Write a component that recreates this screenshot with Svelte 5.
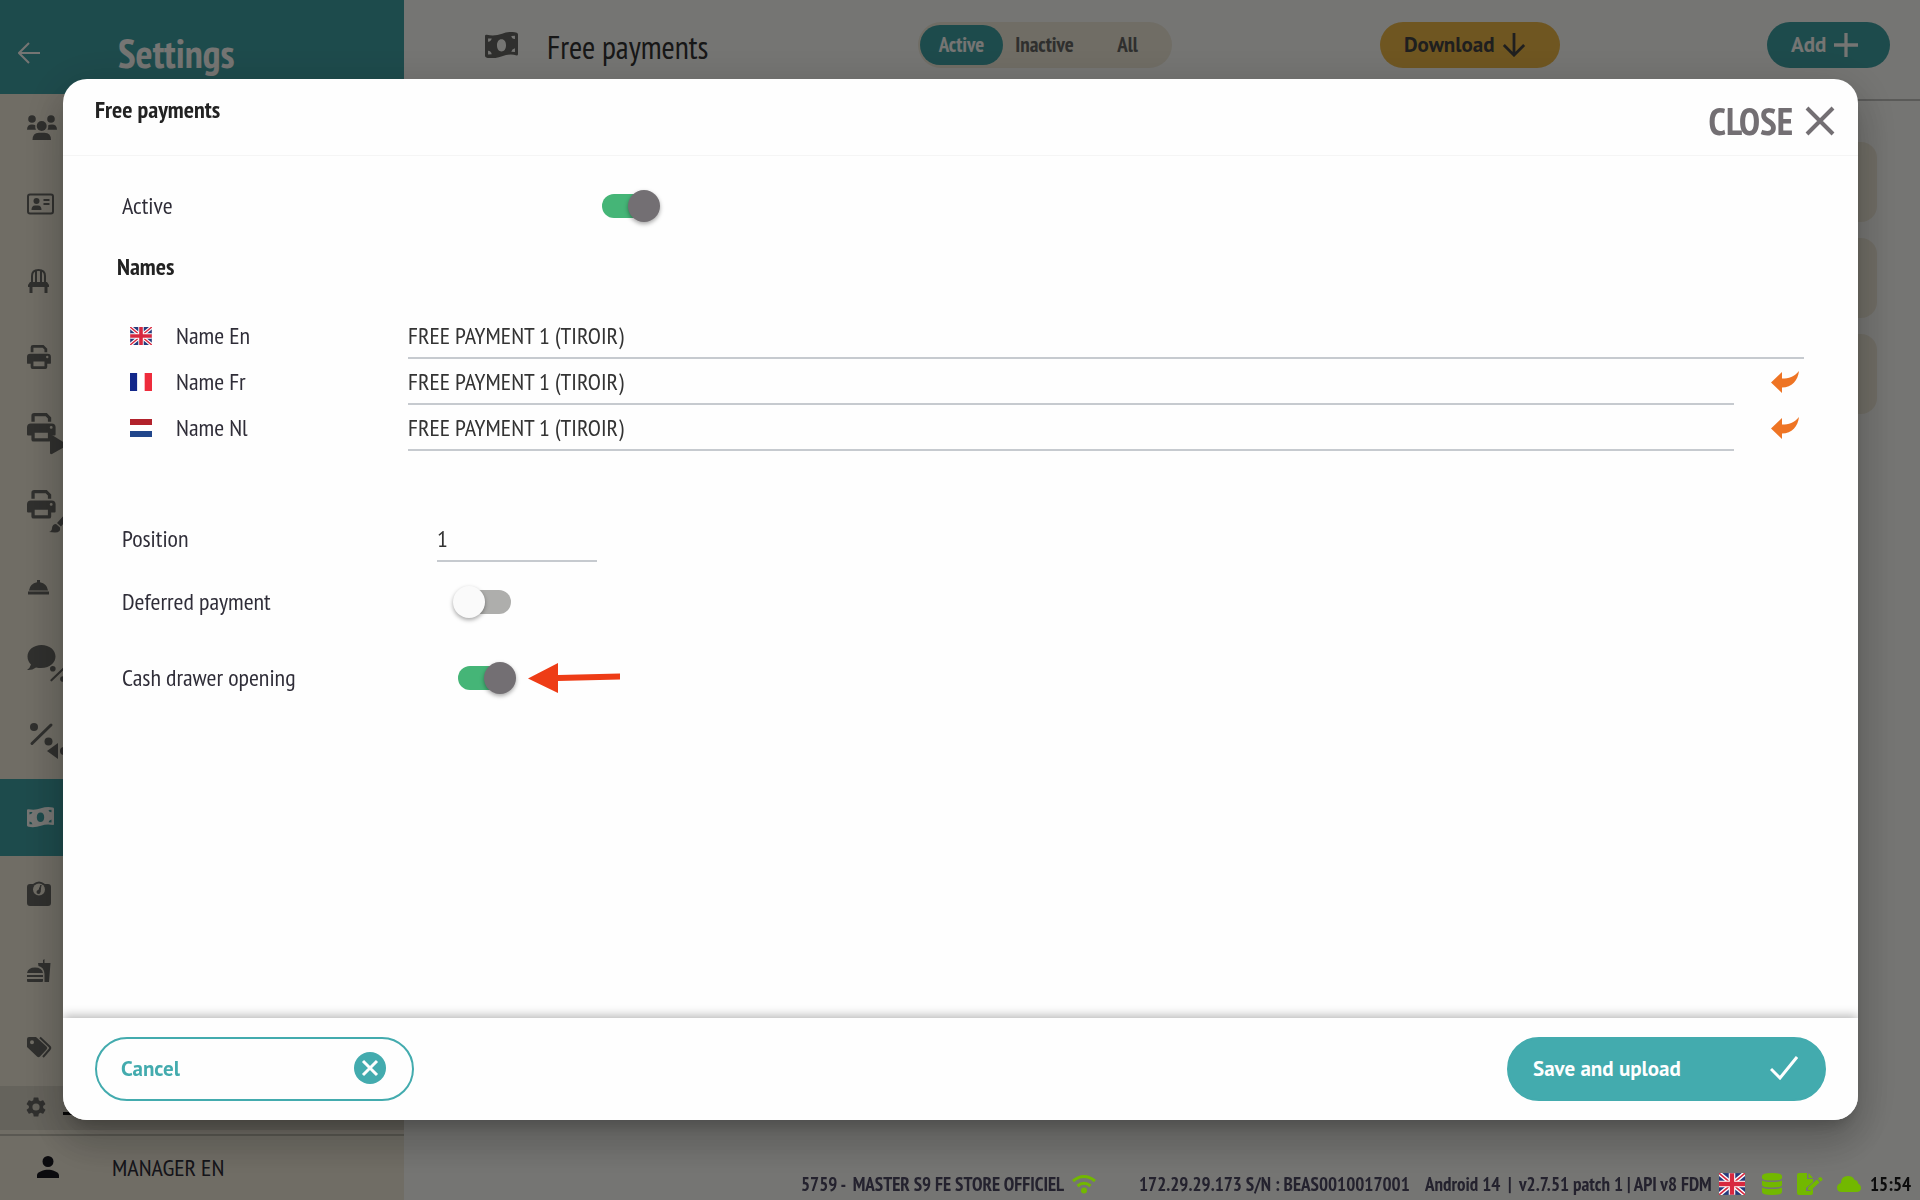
<script lang="ts">
    type Tab = "Active" | "Inactive" | "All";

    const menu = [
        {id: "people", label: "Users"},
        {id: "card", label: "Customers"},
        {id: "chair", label: "Tables"},
        {id: "printer", label: "Printers"},
        {id: "printerPlay", label: "Printer routing"},
        {id: "printerBrush", label: "Printer layout"},
        {id: "bell", label: "Services"},
        {id: "chat", label: "Discount messages"},
        {id: "percent", label: "Discounts"},
        {id: "money", label: "Free payments"},
        {id: "scale", label: "Scale"},
        {id: "food", label: "Products"},
        {id: "tags", label: "Tags"},
    ];
    const tabs: Tab[] = ["Active", "Inactive", "All"];

    let tab = $state<Tab>("Active");
    let active = $state(true);
    let position = $state("1");
    let deferred = $state(false);
    let drawer = $state(true);
    let names = $state([
        {lang: "En", value: "FREE PAYMENT 1 (TIROIR)"},
        {lang: "Fr", value: "FREE PAYMENT 1 (TIROIR)"},
        {lang: "Nl", value: "FREE PAYMENT 1 (TIROIR)"},
    ]);

    // Copy the main name over a translated one.
    function resetName(i: number) {
        names[i].value = names[0].value;
    }
</script>

{#snippet moneyShape()}
    <path fill-rule="evenodd" d="M0 3Q0 2 1.500 2.200Q8 3.500 14 1.300T26 .5Q27 .8 27 2V17Q27 18.200 26 18Q20 16.500 14 18.700T1.500 19.800Q0 19.500 0 18.500V3ZM13.500 5.500C11.200 5.500 9.800 7.500 9.800 10.200S11.200 15 13.500 15 17.200 13 17.200 10.200 15.800 5.500 13.500 5.500ZM2.500 5V7.500Q5 7.300 5.500 5ZM21.500 3Q22 5.500 24.500 5.300V2.800ZM2.500 14.500V17.300L5.500 17.200Q5 14.700 2.500 14.500ZM24.500 12.500Q22 13 21.500 15.200L24.500 15.400Z"/>
{/snippet}

{#snippet printerShape()}
    <path fill-rule="evenodd" d="M4 8V2.500Q4 0 6.500 0H18L22 4V8H19V5L17 3H7V8ZM3.500 9.500H22.500Q26 9.500 26 13V19.500Q26 20.500 25 20.500H22V24Q22 26 20 26H6Q4 26 4 24V20.500H1Q0 20.500 0 19.500V13Q0 9.500 3.500 9.500ZM7 18V23H19V18ZM22 11.800A1.300 1.300 0 1 0 22 14.400A1.300 1.300 0 1 0 22 11.800Z"/>
{/snippet}

{#snippet percentShape()}
    <circle cx="4" cy="4" r="4"/>
    <circle cx="18.500" cy="18.500" r="4"/>
    <path d="M2 20.500 21 2" fill="none" stroke="currentColor" stroke-width="3" stroke-linecap="round"/>
{/snippet}

{#snippet ukFlag()}
    <svg class="flag" viewBox="0 0 24 20" aria-hidden="true">
        <path fill="#253a7c" d="M0 0h24v20H0z"/>
        <path stroke="#fff" stroke-width="4" d="m0 0 24 20M24 0 0 20"/>
        <path stroke="#d8283f" stroke-width="1.500" d="m0 0 24 20M24 0 0 20"/>
        <path stroke="#fff" stroke-width="6" d="M12 0v20M0 10h24"/>
        <path stroke="#d8283f" stroke-width="4" d="M12 0v20M0 10h24"/>
    </svg>
{/snippet}

{#snippet menuIcon(id: string)}
    <svg class="icon" viewBox="0 0 40 40" aria-hidden="true">
        {#if id === "people"}
            <circle cx="8" cy="12" r="3.800"/>
            <circle cx="27" cy="12" r="3.800"/>
            <circle cx="17.700" cy="19" r="5"/>
            <path d="M3 22.800Q3 17.500 8 17.500Q10.500 17.500 11.300 18.300Q11 21 12 22.800ZM33 22.800Q33 17.500 28 17.500Q25 17.500 24.200 18.300Q24.500 21 23.500 22.800ZM8.500 33Q8.500 25.700 15 25.700H20.500Q27 25.700 27 33Z"/>
        {:else if id === "card"}
            <rect x="4" y="10.500" width="25" height="19" rx="2" fill="none" stroke="currentColor" stroke-width="2"/>
            <circle cx="12.500" cy="17" r="3"/>
            <path d="M7.500 26Q7.500 21.500 11 21.500H14Q17.500 21.500 17.500 26ZM19.500 15H25.500V17H19.500ZM19.500 19H25.500V21H19.500Z"/>
        {:else if id === "chair"}
            <path fill="none" stroke="currentColor" stroke-width="2" d="M8 21V15Q8 9 14.500 9T21 15V21M12 21V10M17 21V10"/>
            <path d="M6 21H23L25 24V26H23.500V32H20.500V26H8.500V32H5.500V26H4V24Z"/>
        {:else if id === "printer"}
            <g transform="translate(3 8) scale(.92)">{@render printerShape()}</g>
        {:else if id === "printerPlay"}
            <g transform="translate(3 -1) scale(1.100)">{@render printerShape()}</g>
            <path d="M26 22Q26 20.500 28 21L44 31 28 40Q26 40.500 26 39Z"/>
        {:else if id === "printerBrush"}
            <g transform="translate(3 -1) scale(1.100)">{@render printerShape()}</g>
            <path d="M25 41Q28 40 28 37Q28.500 33 32 33L36 36.500Q37 41.500 31 41.500ZM33 32 42 22 45 26 37 35.500Z"/>
        {:else if id === "bell"}
            <path d="M4 24.500H25V27.500H4ZM5 23.500Q6 16.500 13 15.300V13H16V15.300Q23 16.500 24 23.500Z"/>
        {:else if id === "chat"}
            <path d="M17.500 1C9.500 1 3.500 6 3.500 12.500C3.500 16 5 18.500 7 20.500Q6 24 3 26Q8 26.500 12 23.500C25 26 31.500 19 31.500 12.500C31.500 6 25.500 1 17.500 1Z"/>
            <g transform="translate(26 22) scale(.7)">{@render percentShape()}</g>
        {:else if id === "percent"}
            <g transform="translate(6 2)">{@render percentShape()}</g>
            <path d="M23 30 34 22V38Z"/>
            <circle cx="40" cy="30" r="4"/>
        {:else if id === "money"}
            <g transform="translate(3 9)">{@render moneyShape()}</g>
        {:else if id === "scale"}
            <path d="M6 10H9Q15 5 21 10H24Q27 10 27 13V29Q27 32 24 32H6Q3 32 3 29V13Q3 10 6 10Z"/>
            <circle cx="15" cy="15.500" r="6" class="cut"/>
            <circle cx="14.500" cy="18" r="2"/>
            <path d="M14 18 17 11 16 18Z" stroke="currentColor"/>
        {:else if id === "food"}
            <path d="M3 22Q4 16.500 11 16.500T19 22ZM3 24H19V26H3ZM3 28H19V30Q19 31 18 31H4Q3 31 3 30ZM14 12H19V9L20.500 8V12H26.500L25 31H20.500V23Q20 16 14.500 15Z"/>
        {:else if id === "tags"}
            <path fill-rule="evenodd" d="M3 11Q3 9 5 9H12L22.500 18.500Q24 20 22.500 21.500L16 28.500Q14.500 30 13 28.500L3 19ZM8 12.200A2 2 0 1 0 8 16.200A2 2 0 1 0 8 12.200Z"/>
            <path fill="none" stroke="currentColor" stroke-width="2" d="M16 9.500 25.500 18.500Q27 20 25.500 21.500L19 29"/>
        {/if}
    </svg>
{/snippet}

{#snippet toggle(id: string, on: boolean, set: (v: boolean) => void)}
    <input class="switch" type="checkbox" role="switch" {id} checked={on}
           onchange={(e) => set(e.currentTarget.checked)}/>
{/snippet}

<div class="page">
    <aside class="sidebar">
        <header class="side-head">
            <button class="back" aria-label="Back">
                <svg viewBox="0 0 22 22" aria-hidden="true"><path d="M22 11H2M11 1 1 11l10 10"/></svg>
            </button>
            <h1>Settings</h1>
        </header>
        <nav class="menu" aria-label="Settings">
            {#each menu as m (m.id)}
                <button class="item" class:current={m.id === "money"} aria-label={m.label}>
                    {@render menuIcon(m.id)}
                </button>
            {/each}
        </nav>
        <button class="general" aria-label="General settings">
            <svg viewBox="2 2 20 20" aria-hidden="true"><path d="M19.140 12.940c.04-.3.06-.61.06-.94s-.02-.64-.07-.94l2.030-1.580a.49.49 0 0 0 .12-.61l-1.920-3.320a.49.49 0 0 0-.59-.22l-2.390.96a7 7 0 0 0-1.620-.94l-.36-2.540a.48.48 0 0 0-.48-.41h-3.840a.48.48 0 0 0-.47.41l-.36 2.540a7 7 0 0 0-1.620.94l-2.390-.96a.48.48 0 0 0-.59.22L2.740 8.870a.47.47 0 0 0 .12.61l2.030 1.580a6 6 0 0 0 0 1.880l-2.030 1.580a.49.49 0 0 0-.12.61l1.920 3.320c.12.220.37.290.59.220l2.390-.96c.5.380 1.030.700 1.620.940l.36 2.540c.05.240.24.410.48.410h3.840c.24 0 .44-.17.47-.41l.36-2.540a7 7 0 0 0 1.620-.94l2.390.96c.22.080.47 0 .59-.22l1.920-3.320a.47.47 0 0 0-.12-.61zM12 15.600a3.600 3.600 0 1 1 0-7.200 3.600 3.600 0 0 1 0 7.200"/></svg>
            <span class="mark"></span>
        </button>
        <footer class="user">
            <svg viewBox="4 4 16 16" aria-hidden="true"><path d="M12 12a4 4 0 1 0 0-8 4 4 0 0 0 0 8m0 2c-2.670 0-8 1.340-8 4v2h16v-2c0-2.660-5.330-4-8-4"/></svg>
            <span>MANAGER EN</span>
        </footer>
    </aside>

    <main>
        <header class="bar">
            <svg class="bar-icon" viewBox="0 0 27 20" preserveAspectRatio="none" aria-hidden="true">{@render moneyShape()}</svg>
            <h2>Free payments</h2>
            <div class="tabs">
                {#each tabs as t (t)}
                    <button class="tab" class:selected={tab === t} onclick={() => (tab = t)}>{t}</button>
                {/each}
            </div>
            <button class="pill download">Download
                <svg viewBox="0 0 24 26" aria-hidden="true"><path d="M12 0v24M1 13l11 11 11-11"/></svg>
            </button>
            <button class="pill add">Add
                <svg viewBox="0 0 22 22" aria-hidden="true"><path d="M11 0v22M0 11h22"/></svg>
            </button>
        </header>
        <div class="cards">
            <div class="card"></div>
            <div class="card"></div>
            <div class="card"></div>
        </div>
    </main>
</div>

<div class="backdrop">
    <div class="dialog" role="dialog" aria-modal="true" aria-labelledby="dialog-title">
        <header class="dialog-head">
            <h3 id="dialog-title">Free payments</h3>
            <button class="close">CLOSE
                <svg viewBox="0 0 30 30" aria-hidden="true"><path d="m2 2 26 26M28 2 2 28"/></svg>
            </button>
        </header>

        <form class="body">
            <div class="row first">
                <label for="active">Active</label>
                {@render toggle("active", active, (v) => (active = v))}
            </div>

            <h4>Names</h4>
            {#each names as n, i (n.lang)}
                <div class="name-row">
                    {#if n.lang === "En"}
                        {@render ukFlag()}
                    {:else if n.lang === "Fr"}
                        <svg class="flag" viewBox="0 0 3 2" preserveAspectRatio="none" aria-hidden="true"><path fill="#12278a" d="M0 0h1v2H0z"/><path fill="#fff" d="M1 0h1v2H1z"/><path fill="#ee2c3c" d="M2 0h1v2H2z"/></svg>
                    {:else}
                        <svg class="flag" viewBox="0 0 3 3" preserveAspectRatio="none" aria-hidden="true"><path fill="#b2222c" d="M0 0h3v1H0z"/><path fill="#fff" d="M0 1h3v1H0z"/><path fill="#21468b" d="M0 2h3v1H0z"/></svg>
                    {/if}
                    <label for="name-{n.lang}">Name {n.lang}</label>
                    <input class="field" id="name-{n.lang}" type="text" bind:value={n.value}/>
                    {#if i > 0}
                        <button class="reset" type="button" aria-label="Copy main name" onclick={() => resetName(i)}>
                            <svg viewBox="0 0 28 22" aria-hidden="true"><path d="M0 11.500 11 1V7.500C18 7.500 23 6 28 0C27 9 21 16.500 11 16.500V22Z"/></svg>
                        </button>
                    {/if}
                </div>
            {/each}

            <div class="row position">
                <label for="position">Position</label>
                <input class="field" id="position" type="text" inputmode="numeric" bind:value={position}/>
            </div>
            <div class="row deferred">
                <label for="deferred">Deferred payment</label>
                {@render toggle("deferred", deferred, (v) => (deferred = v))}
            </div>
            <div class="row drawer">
                <label for="drawer">Cash drawer opening</label>
                {@render toggle("drawer", drawer, (v) => (drawer = v))}
                <svg class="pointer" viewBox="0 0 92 30" aria-hidden="true"><path d="M0 15.500 30 0V12L92 10.500V16.500L30 18V30Z"/></svg>
            </div>
        </form>

        <footer class="actions">
            <button class="action cancel">Cancel
                <svg viewBox="0 0 32 32" aria-hidden="true"><circle cx="16" cy="16" r="16"/><path d="m9 9 14 14M23 9 9 23"/></svg>
            </button>
            <button class="action save">Save and upload
                <svg viewBox="0 0 28 24" aria-hidden="true"><path d="m1 13 9 9L27 1"/></svg>
            </button>
        </footer>
    </div>
</div>

<div class="status">
    <span>5759 -&nbsp; MASTER S9 FE STORE OFFICIEL</span>
    <svg class="wifi" viewBox="0 0 26 20" aria-hidden="true"><path d="M2 7Q13-2 24 7M6.500 12Q13 6.500 19.500 12"/><circle cx="13" cy="16.500" r="3"/></svg>
    <span>172.29.29.173 S/N : BEAS0010017001</span>
    <span>Android 14 &nbsp;|</span>
    <span>v2.7.51 patch 1 | API v8 FDM</span>
    {@render ukFlag()}
    <svg class="db" viewBox="0 0 20 22" aria-hidden="true"><path d="M0 3Q0 0 10 0T20 3V5Q20 7.500 10 7.500T0 5ZM0 7.500Q3 9 10 9T20 7.500V12Q20 14.500 10 14.500T0 12ZM0 14.500Q3 16 10 16T20 14.500V19Q20 22 10 22T0 19Z"/></svg>
    <svg class="doc" viewBox="0 0 26 22" aria-hidden="true"><path d="M0 2Q0 0 2 0H10V6H16V9L9 15V18H13L16 15.500V20Q16 22 14 22H2Q0 22 0 20ZM11.500 0 16 5H11.500ZM11 14.500 20 6.500 22.500 9.500 14 17H11ZM21 5.500 23 4Q26 5 25.500 7L23.500 8.500Z"/></svg>
    <svg class="cloud" viewBox="0 0 24 16" aria-hidden="true"><path d="M5 16Q0 16 0 11.500 0 8 4 7 4 0 11 0 16 0 17.500 4 21 4 21 7.500 24 9 24 12 24 16 19.500 16Z"/></svg>
    <time>15:54</time>
</div>

<style>
    :global(body) {
        margin: 0;
        background: #fefefa;
        font-family: "PT Sans Narrow", "Liberation Sans Narrow", "Open Sans", sans-serif;
        color: #2f2d38;
    }

    h1, h2, h3, h4 {
        margin: 0;
    }

    button, input {
        font: inherit;
        color: inherit;
        border: none;
        background: none;
        padding: 0;
    }

    button {
        cursor: pointer;
    }

    svg {
        display: block;
        flex: none;
        fill: currentColor;
    }

    .page {
        display: grid;
        grid-template-columns: 404px 1fr;
        min-height: 100vh;
    }

    .sidebar {
        display: flex;
        flex-direction: column;
        background: #f3eddc;
        color: #686864;
    }

    .side-head {
        display: flex;
        align-items: center;
        gap: 78px;
        height: 94px;
        padding-left: 18px;
        box-sizing: border-box;
        padding-top: 12px;
        background: #41a3a6;
        color: #fefefa;
        position: relative;
        z-index: 1;
    }

    .back svg {
        width: 22px;
        height: 22px;
        fill: none;
        stroke: currentColor;
        stroke-width: 2;
    }

    h1 {
        font-size: 40px;
        line-height: 40px;
    }

    /* First entry is scrolled a little under the header */
    .menu {
        flex: 1;
        display: flex;
        flex-direction: column;
        margin-top: -5px;
    }

    .item {
        flex: 1;
        display: flex;
        align-items: center;
        padding-left: 24px;
    }

    .item.current {
        background: #41a3a6;
        color: #fefefa;
    }

    .icon {
        width: 40px;
        height: 40px;
        overflow: visible;
    }

    .cut {
        fill: #f3eddc;
    }

    .general {
        display: flex;
        align-items: center;
        gap: 17px;
        height: 44px;
        box-sizing: border-box;
        margin-bottom: 4px;
        padding: 0 0 2px 26px;
        background: #dcd7c8;
    }

    .general svg {
        width: 20px;
        height: 20px;
    }

    .mark {
        width: 16px;
        height: 3px;
        margin-top: 12px;
        background: #111;
    }

    .user {
        display: flex;
        align-items: center;
        gap: 53px;
        height: 66px;
        box-sizing: border-box;
        padding: 0 0 2px 37px;
        border-top: 2px solid #c4c0b2;
        font-size: 24px;
        color: #2f2d38;
    }

    .user svg {
        width: 22px;
        height: 22px;
        fill: #1a1820;
    }

    .bar {
        display: flex;
        align-items: center;
        height: 101px;
        box-sizing: border-box;
        padding: 0 30px 10px 81px;
        border-bottom: 2px solid #c4c4c0;
        font-size: 21px;
        font-weight: 700;
    }

    .bar-icon {
        width: 33px;
        height: 26px;
        color: #686864;
    }

    h2 {
        width: 371px;
        margin-left: 29px;
        font-size: 32px;
        font-weight: 400;
        color: #333;
        padding-top: 4px;
    }

    .tabs {
        display: grid;
        grid-template-columns: 83px 83px 83px;
        box-sizing: border-box;
        width: 254px;
        height: 46px;
        padding: 3px 2px;
        border-radius: 23px;
        background: #f3eddc;
        color: #686864;
        margin-right: auto;
    }

    .tab {
        border-radius: 20px;
    }

    .tab.selected {
        background: #41a3a6;
        color: #fefefa;
    }

    .pill {
        display: flex;
        align-items: center;
        box-sizing: border-box;
        gap: 8px;
        height: 46px;
        padding-left: 24px;
        border-radius: 23px;
        font-family: "PT Sans", "Open Sans", sans-serif;
    }

    .pill svg {
        width: 24px;
        height: 24px;
        fill: none;
        stroke: currentColor;
        stroke-width: 3;
    }

    .download {
        width: 180px;
        background: #f1bb48;
        color: #444;
        margin-right: 207px;
    }

    .add {
        width: 123px;
        background: #41a3a6;
        color: #fefefa;
    }

    .cards {
        display: flex;
        flex-direction: column;
        gap: 16px;
        padding: 41px 43px 0 60px;
    }

    .card {
        height: 80px;
        border-radius: 16px;
        background: #f3eddc;
    }

    .backdrop {
        position: fixed;
        inset: 0;
        z-index: 2;
        display: flex;
        padding: 79px 62px 80px 63px;
        background: rgba(0, 0, 0, .54);
    }

    .dialog {
        flex: 1;
        display: flex;
        flex-direction: column;
        overflow: hidden;
        border-radius: 24px;
        background: #fefefe;
        box-shadow: 0 11px 15px -7px rgba(0, 0, 0, .2), 0 24px 38px 3px rgba(0, 0, 0, .14), 0 9px 46px 8px rgba(0, 0, 0, .12);
        font-size: 24px;
    }

    .dialog-head {
        display: flex;
        justify-content: space-between;
        height: 76px;
        padding: 0 23px 0 32px;
        border-bottom: 1px solid #f5f5f5;
    }

    h3 {
        padding-top: 17px;
        font-size: 24px;
        line-height: 28px;
        color: #222;
    }

    .close {
        display: flex;
        align-items: center;
        gap: 12px;
        padding-top: 8px;
        font-size: 38px;
        line-height: 40px;
        font-weight: 700;
        color: #736f73;
    }

    .close svg {
        width: 30px;
        height: 30px;
        fill: none;
        stroke: currentColor;
        stroke-width: 4;
    }

    .body {
        flex: 1;
        padding: 27px 54px 0 59px;
    }

    .row, .name-row {
        display: flex;
        align-items: center;
        height: 46px;
    }

    .row label, .name-row label {
        padding-bottom: 2px;
    }

    .row label {
        width: 315px;
    }

    .row.first label {
        width: 480px;
    }

    h4 {
        margin: 15px 0 23px -5px;
        font-size: 24px;
        line-height: 46px;
        color: #222;
    }

    .name-row label {
        width: 256px;
        padding-left: 24px;
        box-sizing: border-box;
    }

    .flag {
        width: 22px;
        height: 18px;
        margin-left: 8px;
    }

    .field {
        height: 46px;
        box-sizing: border-box;
        border-bottom: 2px solid #c6cacf;
        border-radius: 0;
        color: #333;
        outline: none;
    }

    .field:focus {
        border-color: #43abae;
    }

    .name-row .field {
        flex: 1;
        min-width: 0;
    }

    .position .field {
        width: 160px;
    }

    .reset {
        margin: 0 5px 0 37px;
        color: #ee7424;
    }

    .reset svg {
        width: 28px;
        height: 22px;
    }

    .position {
        margin-top: 65px;
    }

    .deferred {
        margin-top: 17px;
    }

    .drawer {
        margin-top: 30px;
    }

    .switch {
        appearance: none;
        position: relative;
        width: 48px;
        height: 24px;
        margin: 0 0 0 26px;
        border-radius: 12px;
        background: #aeaeac;
        cursor: pointer;
    }

    .switch::before {
        content: "";
        position: absolute;
        top: -4px;
        left: -10px;
        width: 32px;
        height: 32px;
        border-radius: 50%;
        background: #fafafa;
        box-shadow: 0 2px 4px rgba(0, 0, 0, .35);
    }

    .switch:checked {
        margin-left: 21px;
        background: #45b577;
    }

    .first .switch:checked {
        margin-left: 0;
    }

    .switch:checked::before {
        left: 26px;
        background: #736f73;
    }

    .pointer {
        width: 92px;
        height: 30px;
        margin-left: 22px;
        color: #ee3c16;
    }

    .actions {
        display: flex;
        align-items: center;
        justify-content: space-between;
        height: 102px;
        padding: 0 32px;
        background: #fefefe;
        box-shadow: 0 -2px 10px rgba(0, 0, 0, .3);
    }

    .action {
        display: flex;
        align-items: center;
        justify-content: space-between;
        width: 319px;
        height: 64px;
        box-sizing: border-box;
        padding: 0 26px 2px 24px;
        border: 2px solid #43abae;
        border-radius: 32px;
        font-family: "PT Sans", "Open Sans", sans-serif;
        font-size: 21px;
        font-weight: 700;
        color: #43abae;
    }

    .action svg {
        width: 32px;
        height: 32px;
    }

    .action path {
        fill: none;
        stroke: #fefefe;
        stroke-width: 3;
    }

    .action.save {
        background: #43abae;
        color: #fefefe;
    }

    .save svg {
        width: 28px;
        height: 24px;
    }

    .status {
        position: fixed;
        right: 0;
        bottom: 0;
        z-index: 3;
        display: grid;
        grid-template-columns: 270px 68px 286px 94px 200px 43px 35px 40px 33px 50px;
        align-items: center;
        height: 32px;
        font-size: 19px;
        font-weight: 700;
        white-space: nowrap;
        color: #24222e;
    }

    .status svg {
        color: #72b800;
    }

    .status .flag {
        width: 26px;
        height: 22px;
        margin: 0;
    }

    .wifi {
        width: 26px;
        height: 20px;
    }

    .wifi path {
        fill: none;
        stroke: currentColor;
        stroke-width: 3;
    }

    .db {
        width: 20px;
        height: 24px;
    }

    .doc {
        width: 26px;
        height: 24px;
    }

    .cloud {
        width: 24px;
        height: 18px;
    }

    time {
        color: #0c0c0c;
    }
</style>
